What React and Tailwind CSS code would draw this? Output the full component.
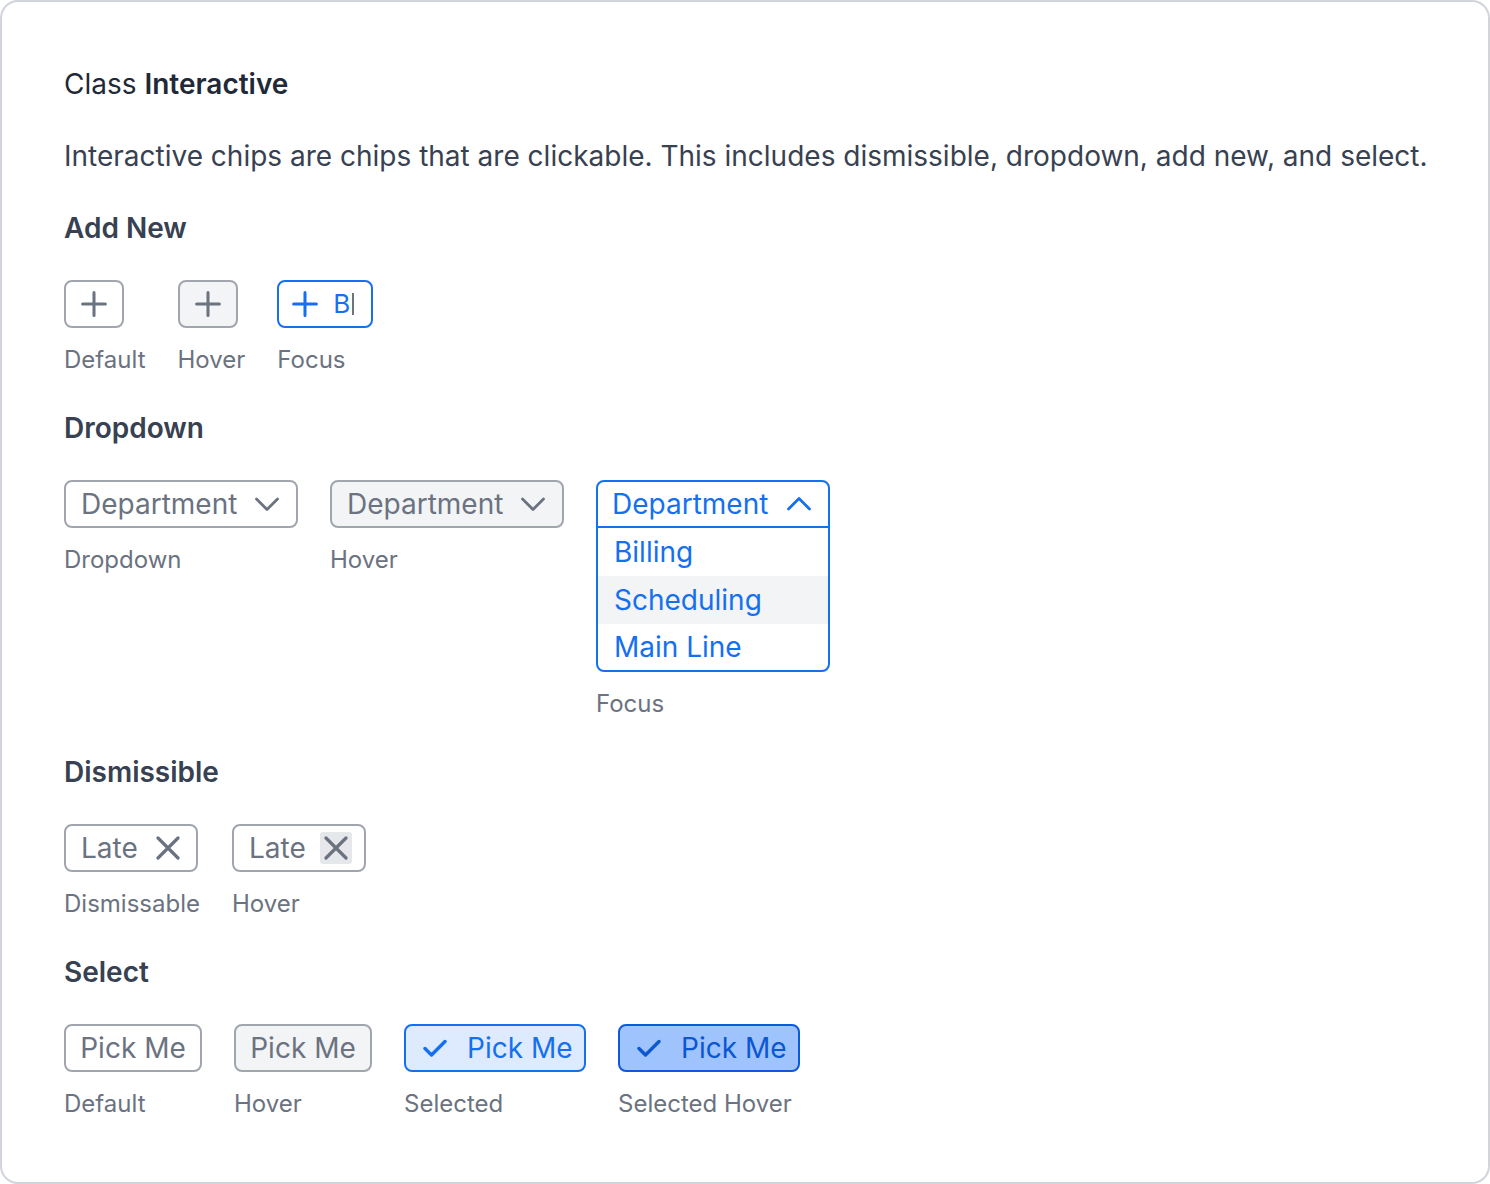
import React from "react";

const FONT = { fontFamily: "Inter, 'Noto Sans', sans-serif" };

function Plus({ className = "" }) {
  return (
    <svg width="26" height="26" viewBox="0 0 24 24" fill="none" className={className}>
      <path d="M12 1.5v21M1.5 12h21" stroke="currentColor" strokeWidth="2.8" strokeLinecap="round" />
    </svg>
  );
}

function Chevron({ up = false, className = "" }) {
  return (
    <svg width="24" height="24" viewBox="0 0 24 24" fill="none" className={className}>
      <path
        d={up ? "M1.5 17 L12 6.5 L22.5 17" : "M1.5 7 L12 17.5 L22.5 7"}
        stroke="currentColor"
        strokeWidth="2.8"
        strokeLinecap="round"
        strokeLinejoin="round"
      />
    </svg>
  );
}

function XIcon({ className = "" }) {
  return (
    <svg width="24" height="24" viewBox="0 0 24 24" fill="none" className={className}>
      <path d="M2 2 L22 22 M22 2 L2 22" stroke="currentColor" strokeWidth="3.2" strokeLinecap="round" />
    </svg>
  );
}

function Check({ className = "" }) {
  return (
    <svg width="24" height="24" viewBox="0 0 24 24" fill="none" className={className}>
      <path d="M2 12.5 L8.5 19 L22 5.5" stroke="currentColor" strokeWidth="3.4" strokeLinecap="round" strokeLinejoin="round" />
    </svg>
  );
}

function Item({ label, children }) {
  return (
    <div className="flex flex-col items-start gap-4">
      {children}
      <div className="h-8 text-[24px] leading-8 text-[#6b7280]">{label}</div>
    </div>
  );
}

function Section({ title, children }) {
  return (
    <div className="flex flex-col gap-8">
      <div className="h-10 text-[28px] leading-10 font-semibold text-[#374151]">{title}</div>
      <div className="flex items-start gap-8">{children}</div>
    </div>
  );
}

export default function App() {
  return (
    <div style={FONT} className="w-[1490px] h-[1184px] bg-white">
      <div className="w-full h-full border-2 border-[#d1d5db] rounded-[18px] px-[62px] pt-[62px] flex flex-col gap-8">
        <div className="h-10 text-[28px] leading-10 text-[#1f2937]">
          Class <span className="font-semibold">Interactive</span>
        </div>
        <div className="h-10 text-[28px] leading-10 text-[#374151] whitespace-nowrap">
          Interactive chips are chips that are clickable. This includes dismissible, dropdown, add new, and select.
        </div>

        <Section title="Add New">
          <Item label="Default">
            <div className="h-12 w-[60px] flex items-center justify-center border-2 border-[#a1a6ae] rounded-lg text-[#6b7280]">
              <Plus />
            </div>
          </Item>
          <Item label="Hover">
            <div className="h-12 w-[60px] flex items-center justify-center border-2 border-[#a1a6ae] rounded-lg bg-[#f3f4f6] text-[#6b7280]">
              <Plus />
            </div>
          </Item>
          <Item label="Focus">
            <div className="h-12 w-[96px] flex items-center pl-[13px] border-2 border-[#1570ef] rounded-lg text-[#1570ef]">
              <Plus />
              <span className="ml-[15px] text-[26px] leading-none">B</span>
              <span className="ml-[2px] w-[2px] h-[22px] bg-[#6b7280]"></span>
            </div>
          </Item>
        </Section>

        <Section title="Dropdown">
          <Item label="Dropdown">
            <div className="h-12 w-[234px] flex items-center justify-between pl-[15px] pr-[17px] border-2 border-[#a1a6ae] rounded-lg text-[#6b7280]">
              <span className="text-[28px] leading-none">Department</span>
              <Chevron />
            </div>
          </Item>
          <Item label="Hover">
            <div className="h-12 w-[234px] flex items-center justify-between pl-[15px] pr-[17px] border-2 border-[#a1a6ae] rounded-lg bg-[#f3f4f6] text-[#6b7280]">
              <span className="text-[28px] leading-none">Department</span>
              <Chevron />
            </div>
          </Item>
          <Item label="Focus">
            <div className="w-[234px] border-2 border-[#1570ef] rounded-lg text-[#1570ef] overflow-hidden">
              <div className="h-[46px] flex items-center justify-between pl-[14px] pr-[17px] border-b-2 border-[#1570ef]">
                <span className="text-[28px] leading-none">Department</span>
                <Chevron up />
              </div>
              <div className="h-12 flex items-center pl-4 text-[28px]">Billing</div>
              <div className="h-12 flex items-center pl-4 text-[28px] bg-[#f3f4f6]">Scheduling</div>
              <div className="h-[46px] flex items-center pl-4 text-[28px]">Main Line</div>
            </div>
          </Item>
        </Section>

        <Section title="Dismissible">
          <Item label="Dismissable">
            <div className="h-12 w-[134px] flex items-center pl-[15px] border-2 border-[#a1a6ae] rounded-lg text-[#6b7280]">
              <span className="text-[28px] leading-none">Late</span>
              <span className="ml-[14px] w-[32px] h-[32px] flex items-center justify-center">
                <XIcon />
              </span>
            </div>
          </Item>
          <Item label="Hover">
            <div className="h-12 w-[134px] flex items-center pl-[15px] border-2 border-[#a1a6ae] rounded-lg text-[#6b7280]">
              <span className="text-[28px] leading-none">Late</span>
              <span className="ml-[14px] w-[32px] h-[32px] flex items-center justify-center bg-[#e5e7eb] rounded-[3px]">
                <XIcon />
              </span>
            </div>
          </Item>
        </Section>

        <Section title="Select">
          <Item label="Default">
            <div className="h-12 w-[138px] flex items-center justify-center border-2 border-[#a1a6ae] rounded-lg text-[#6b7280]">
              <span className="text-[28px] leading-none">Pick Me</span>
            </div>
          </Item>
          <Item label="Hover">
            <div className="h-12 w-[138px] flex items-center justify-center border-2 border-[#a1a6ae] rounded-lg bg-[#f3f4f6] text-[#6b7280]">
              <span className="text-[28px] leading-none">Pick Me</span>
            </div>
          </Item>
          <Item label="Selected">
            <div className="h-12 w-[182px] flex items-center pl-[17px] border-2 border-[#1570ef] rounded-lg bg-[#deebff] text-[#1570ef]">
              <Check />
              <span className="ml-[20px] text-[28px] leading-none">Pick Me</span>
            </div>
          </Item>
          <Item label="Selected Hover">
            <div className="h-12 w-[182px] flex items-center pl-[17px] border-2 border-[#0b5ad9] rounded-lg bg-[#9fc3fd] text-[#0b57d0]">
              <Check />
              <span className="ml-[20px] text-[28px] leading-none">Pick Me</span>
            </div>
          </Item>
        </Section>
      </div>
    </div>
  );
}
